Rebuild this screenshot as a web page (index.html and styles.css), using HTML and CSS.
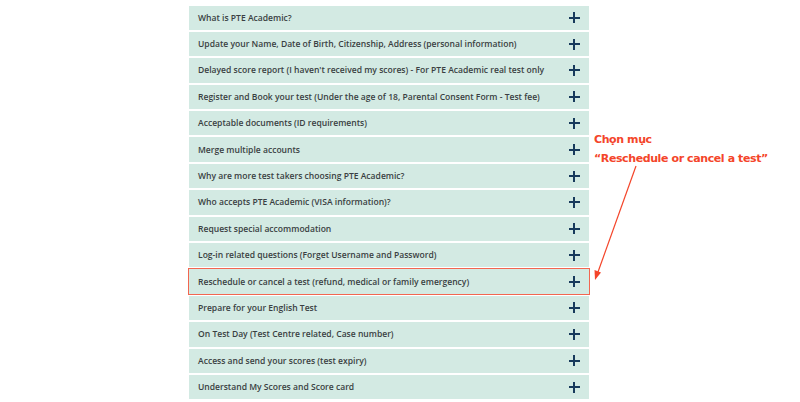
FILE: index.html
```html
<!DOCTYPE html>
<html lang="vi">
<head>
<meta charset="utf-8">
<title>PTE Academic FAQ</title>
<link rel="stylesheet" href="styles.css">
</head>
<body>
<div class="page">
	<ul class="faq">
		<li class="faq-item"><span>What is PTE Academic?</span><i class="plus"></i></li>
		<li class="faq-item"><span>Update your Name, Date of Birth, Citizenship, Address (personal information)</span><i class="plus"></i></li>
		<li class="faq-item"><span>Delayed score report (I haven't received my scores) - For PTE Academic real test only</span><i class="plus"></i></li>
		<li class="faq-item"><span>Register and Book your test (Under the age of 18, Parental Consent Form - Test fee)</span><i class="plus"></i></li>
		<li class="faq-item"><span>Acceptable documents (ID requirements)</span><i class="plus"></i></li>
		<li class="faq-item"><span>Merge multiple accounts</span><i class="plus"></i></li>
		<li class="faq-item"><span>Why are more test takers choosing PTE Academic?</span><i class="plus"></i></li>
		<li class="faq-item"><span>Who accepts PTE Academic (VISA information)?</span><i class="plus"></i></li>
		<li class="faq-item"><span>Request special accommodation</span><i class="plus"></i></li>
		<li class="faq-item"><span>Log-in related questions (Forget Username and Password)</span><i class="plus"></i></li>
		<li class="faq-item marked"><span>Reschedule or cancel a test (refund, medical or family emergency)</span><i class="plus"></i></li>
		<li class="faq-item"><span>Prepare for your English Test</span><i class="plus"></i></li>
		<li class="faq-item"><span>On Test Day (Test Centre related, Case number)</span><i class="plus"></i></li>
		<li class="faq-item"><span>Access and send your scores (test expiry)</span><i class="plus"></i></li>
		<li class="faq-item"><span>Understand My Scores and Score card</span><i class="plus"></i></li>
	</ul>

	<!-- ghi chú đỏ bên phải -->
	<div class="note">
		<p>Chọn mục</p>
		<p>“Reschedule or cancel a test”</p>
	</div>
	<svg class="note-arrow" width="800" height="402" viewBox="0 0 800 402">
		<line x1="636" y1="166" x2="598" y2="272" stroke="#f4452a" stroke-width="1.2"/>
		<polygon points="595,280 594.5,270 601,272.5" fill="#f4452a"/>
	</svg>
</div>
</body>
</html>
```

FILE: styles.css
```css
body, ul, li, p { margin: 0; padding: 0; }
li { list-style: none; }
body { background: #fff; font-family: "Open Sans", "Noto Sans", sans-serif; }

.page { position: relative; width: 800px; height: 402px; overflow: hidden; }

.faq { width: 400px; margin-left: 189px; padding-top: 5.5px; }
.faq-item { display: flex; align-items: center; justify-content: space-between; height: 24.4px; margin-bottom: 2px; padding: 0 9.5px 0 9px; background: #d3eae3; font-size: 8.55px; font-weight: 600; color: #3a3f42; white-space: nowrap; }
.faq-item.marked { outline: 1.5px solid #f26650; }

/* dấu cộng */
.plus { position: relative; display: block; width: 11px; height: 11px; flex: none; }
.plus:before, .plus:after { content: ""; position: absolute; background: #173a5c; }
.plus:before { left: 4.5px; top: 0; width: 2px; height: 11px; }
.plus:after { left: 0; top: 4.5px; width: 11px; height: 2px; }

.note { position: absolute; left: 594px; top: 130px; font-family: "DejaVu Sans", sans-serif; font-weight: bold; font-size: 11px; line-height: 19px; color: #f4452a; letter-spacing: -0.4px; }
.note-arrow { position: absolute; left: 0; top: 0; }
```
